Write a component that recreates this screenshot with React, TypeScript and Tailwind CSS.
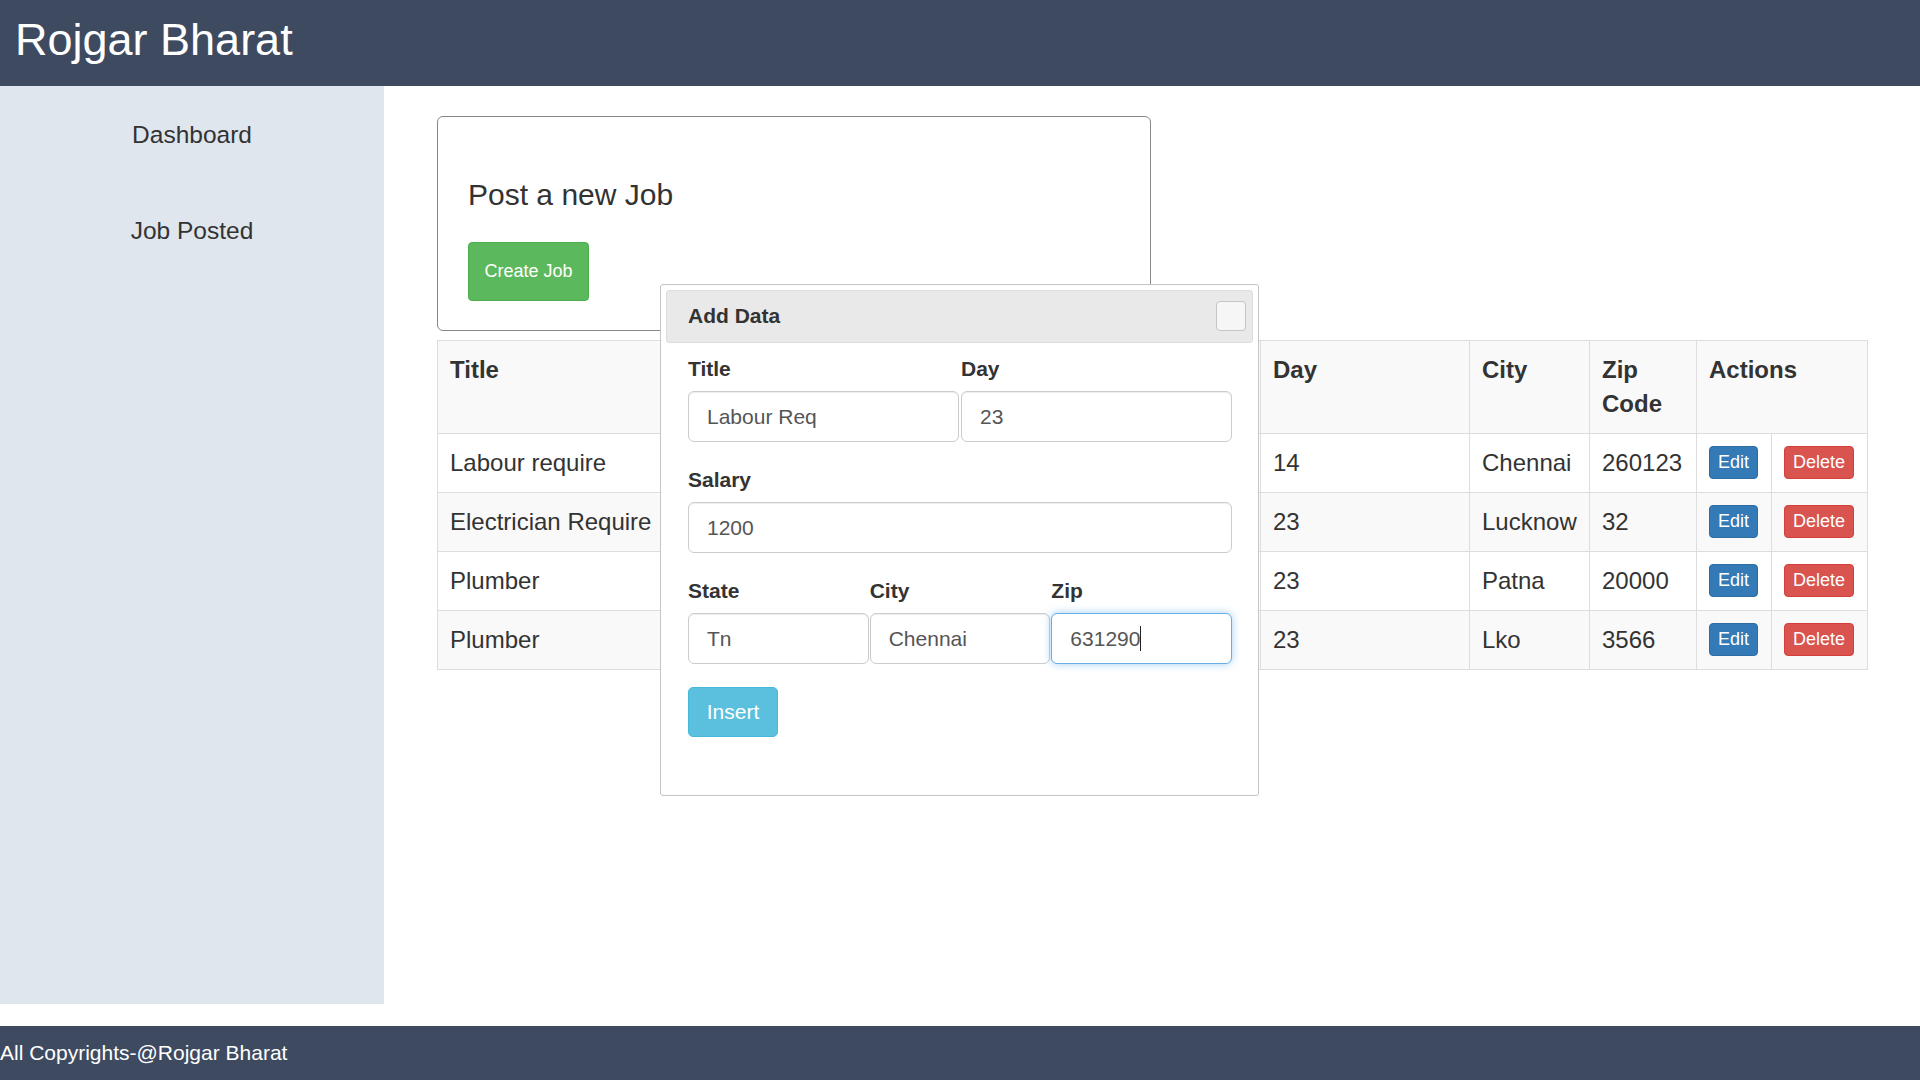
import React from "react";

const rows = [
  { title: "Labour require", day: "14", city: "Chennai", zip: "260123" },
  { title: "Electrician Require", day: "23", city: "Lucknow", zip: "32" },
  { title: "Plumber", day: "23", city: "Patna", zip: "20000" },
  { title: "Plumber", day: "23", city: "Lko", zip: "3566" },
];

function Field({ value, focused, caret }: { value: string; focused?: boolean; caret?: boolean }) {
  return (
    <div
      className={
        "h-[51px] w-full flex items-center pl-[18px] rounded-[6px] bg-white text-[21px] text-[#555] " +
        (focused
          ? "border border-[#66afe9] shadow-[0_0_8px_rgba(102,175,233,0.6)]"
          : "border border-[#ccc] shadow-[inset_0_1px_1px_rgba(0,0,0,0.075)]")
      }
    >
      <span>{value}</span>
      {caret ? <span className="inline-block w-[1px] h-[25px] bg-[#222]" /> : null}
    </div>
  );
}

export default function App() {
  return (
    <div className="w-[1920px] h-[1080px] flex flex-col bg-white font-['Liberation_Sans',Arial,sans-serif] text-[#333] overflow-hidden">
      {/* Header */}
      <header className="h-[86px] shrink-0 bg-[#3e4a5f] flex items-center pl-[15px] pb-[8px]">
        <h1 className="text-[45px] leading-none text-white">Rojgar Bharat</h1>
      </header>

      {/* Middle */}
      <div className="h-[940px] shrink-0 flex items-start">
        <aside className="w-[384px] h-[918px] shrink-0 bg-[#dfe6ee] flex flex-col items-center pt-[32px] gap-[62px]">
          <div className="text-[24.5px] leading-[34px]">Dashboard</div>
          <div className="text-[24.5px] leading-[34px]">Job Posted</div>
        </aside>

        <main className="relative flex-1 pl-[53px] pt-[30px]">
          {/* Card */}
          <div className="w-[714px] h-[215px] border border-[#888] rounded-[6px] px-[30px] pt-[61px]">
            <h3 className="text-[30px] leading-[33px]">Post a new Job</h3>
            <button className="mt-[31px] w-[121px] h-[59px] bg-[#5cb85c] border border-[#4cae4c] rounded-[4px] text-white text-[18px] flex items-center justify-center">
              Create Job
            </button>
          </div>

          {/* Table */}
          <table className="mt-[9px] w-[1430px] table-fixed border-collapse text-[24px] leading-[34px]">
            <colgroup>
              <col className="w-[290px]" />
              <col className="w-[270px]" />
              <col className="w-[263px]" />
              <col className="w-[209px]" />
              <col className="w-[120px]" />
              <col className="w-[107px]" />
              <col className="w-[75px]" />
              <col className="w-[96px]" />
            </colgroup>
            <tbody>
              <tr className="bg-[#f9f9f9]">
                {["Title", "", "", "Day", "City", "Zip Code"].map((h, i) => (
                  <th key={i} className="border border-[#ddd] p-[12px] text-left align-top font-bold">
                    {h}
                  </th>
                ))}
                <th colSpan={2} className="border border-[#ddd] p-[12px] text-left align-top font-bold">
                  Actions
                </th>
              </tr>
              {rows.map((r, i) => (
                <tr key={i} className={i % 2 === 1 ? "bg-[#f9f9f9]" : "bg-white"}>
                  <td className="border border-[#ddd] p-[12px] align-top whitespace-nowrap">{r.title}</td>
                  <td className="border border-[#ddd] p-[12px] align-top"></td>
                  <td className="border border-[#ddd] p-[12px] align-top"></td>
                  <td className="border border-[#ddd] p-[12px] align-top">{r.day}</td>
                  <td className="border border-[#ddd] p-[12px] align-top">{r.city}</td>
                  <td className="border border-[#ddd] p-[12px] align-top">{r.zip}</td>
                  <td className="border border-[#ddd] px-[12px] pt-[12px] pb-[12px] align-top leading-none">
                    <button className="block h-[33px] px-[8px] bg-[#337ab7] border border-[#2e6da4] rounded-[4px] text-white text-[18px] leading-[27px]">
                      Edit
                    </button>
                  </td>
                  <td className="border border-[#ddd] px-[12px] pt-[12px] pb-[12px] align-top leading-none">
                    <button className="block h-[33px] px-[8px] bg-[#d9534f] border border-[#d43f3a] rounded-[4px] text-white text-[18px] leading-[27px]">
                      Delete
                    </button>
                  </td>
                </tr>
              ))}
            </tbody>
          </table>

          {/* Dialog */}
          <div className="absolute left-[276px] top-[198px] w-[599px] h-[512px] bg-white border border-[#c5c5c5] rounded-[3px] p-[5px]">
            <div className="h-[53px] bg-[#e9e9e9] border border-[#dddddd] rounded-[3px] flex items-center justify-between pl-[21px] pr-[6px] pb-[2px]">
              <span className="text-[21px] font-bold text-[#333]">Add Data</span>
              <span className="w-[30px] h-[30px] bg-[#f6f6f6] border border-[#c5c5c5] rounded-[4px]" />
            </div>
            <div className="pl-[22px] pr-[21px] pt-[11px]">
              <div className="flex gap-[2px]">
                <div className="flex-1">
                  <div className="text-[21px] leading-[30px] font-bold mb-[7px]">Title</div>
                  <Field value="Labour Req" />
                </div>
                <div className="flex-1">
                  <div className="text-[21px] leading-[30px] font-bold mb-[7px]">Day</div>
                  <Field value="23" />
                </div>
              </div>
              <div className="mt-[23px]">
                <div className="text-[21px] leading-[30px] font-bold mb-[7px]">Salary</div>
                <Field value="1200" />
              </div>
              <div className="mt-[23px] flex gap-[1px]">
                <div className="flex-1">
                  <div className="text-[21px] leading-[30px] font-bold mb-[7px]">State</div>
                  <Field value="Tn" />
                </div>
                <div className="flex-1">
                  <div className="text-[21px] leading-[30px] font-bold mb-[7px]">City</div>
                  <Field value="Chennai" />
                </div>
                <div className="flex-1">
                  <div className="text-[21px] leading-[30px] font-bold mb-[7px]">Zip</div>
                  <Field value="631290" focused caret />
                </div>
              </div>
              <button className="mt-[23px] w-[90px] h-[50px] bg-[#5bc0de] border border-[#46b8da] rounded-[5px] text-white text-[21px] flex items-center justify-center">
                Insert
              </button>
            </div>
          </div>
        </main>
      </div>

      {/* Footer */}
      <footer className="h-[54px] shrink-0 bg-[#3e4a5f] flex items-center">
        <span className="text-[21px] text-white">All Copyrights-@Rojgar Bharat</span>
      </footer>
    </div>
  );
}
